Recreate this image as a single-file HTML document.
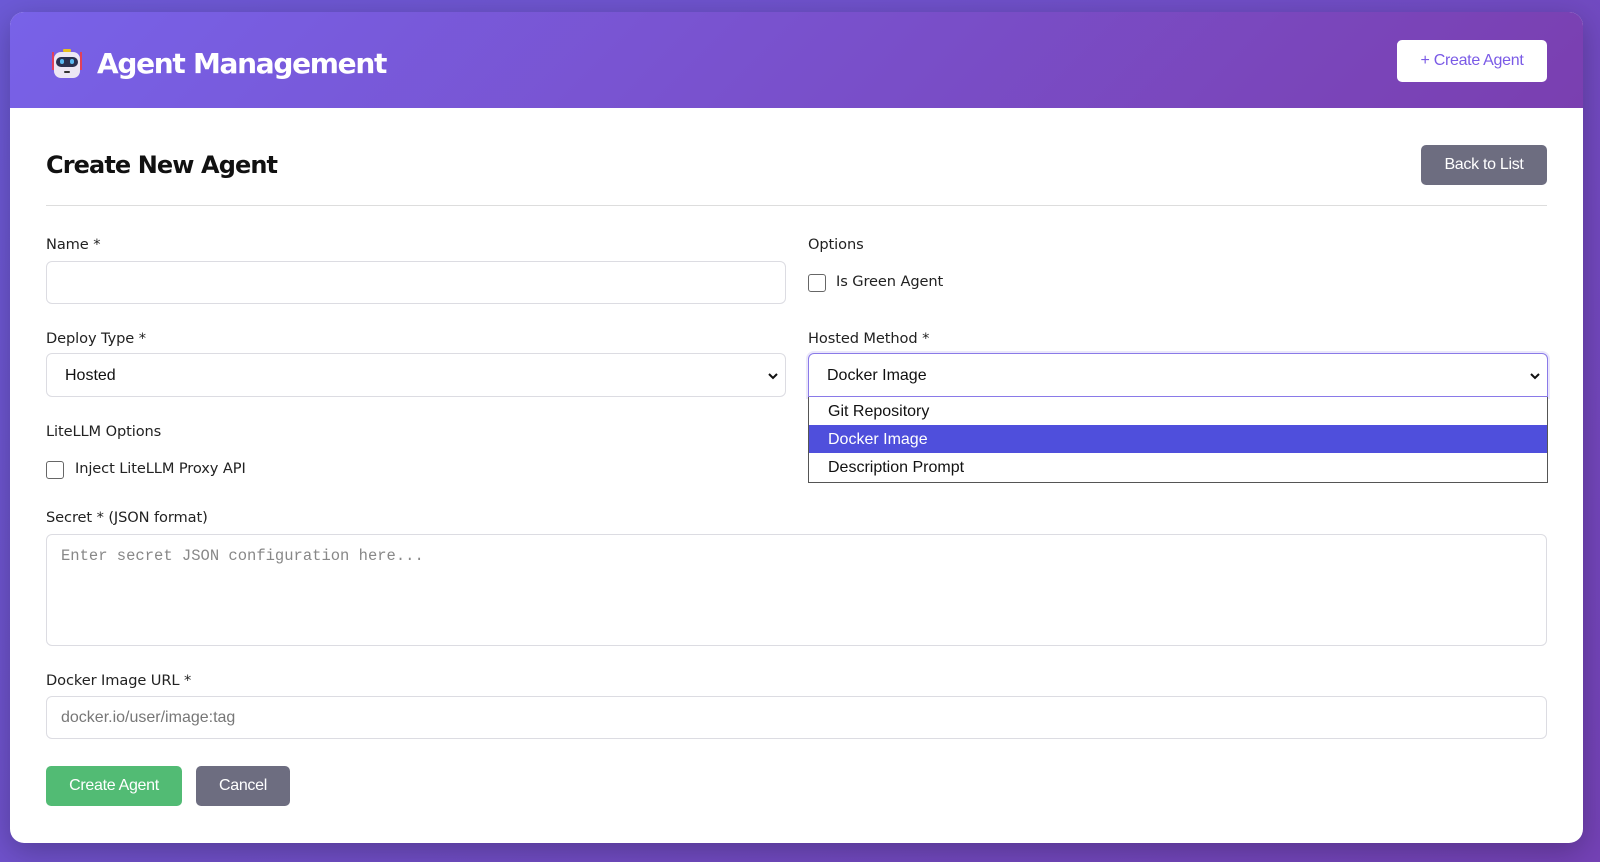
<!DOCTYPE html>
<html><head><meta charset="utf-8"><style>
*{box-sizing:border-box;margin:0;padding:0}
body{width:1600px;height:862px;overflow:hidden;background:linear-gradient(135deg,#6c5ad6,#7442b6);font-family:"Liberation Sans",sans-serif;position:relative}
.card{position:absolute;left:10px;top:12px;width:1573px;height:831px;background:#fff;border-radius:14px;overflow:hidden;box-shadow:0 8px 30px rgba(0,0,0,.25)}
.hdr{position:absolute;left:0;top:0;width:100%;height:96px;background:linear-gradient(135deg,#7862e8,#7a3fb0)}
.a{position:absolute}
.lbl{position:absolute;font-family:"DejaVu Sans","Liberation Sans",sans-serif;font-size:14.6px;color:#222;letter-spacing:-.1px}
.inp{position:absolute;border:1px solid #dcdce2;border-radius:6px;background:#fff;font-size:16px;color:#111}
.cb{position:absolute;width:18px;height:18px;border:1.5px solid #666;border-radius:3px;background:#fff}
.btn{position:absolute;border-radius:5px;color:#fff;font-size:16px;display:flex;align-items:center;justify-content:center;letter-spacing:-.3px}
.chev{position:absolute;right:6px;top:16px}
</style></head><body>
<div class="card">
 <div class="hdr"></div>
 <svg class="a" style="left:40px;top:34px" width="34" height="34" viewBox="0 0 34 34">
  <rect x="13" y="3" width="8" height="3" rx="1" fill="#e8c020"/>
  <line x1="3" y1="6" x2="3" y2="24" stroke="#e0405a" stroke-width="2"/><line x1="31" y1="6" x2="31" y2="24" stroke="#e0405a" stroke-width="2"/>
  <rect x="4" y="6" width="26" height="26" rx="7" fill="#ece6f4"/>
  <rect x="6" y="11" width="22" height="10" rx="5" fill="#2a3050"/>
  <rect x="10" y="13" width="4" height="5" rx="2" fill="#5ab8f0"/><rect x="20" y="13" width="4" height="5" rx="2" fill="#5ab8f0"/>
  <rect x="14" y="25" width="6" height="2" rx="1" fill="#333"/>
 </svg>
 <div class="a" style="left:87px;top:35px;font-family:'DejaVu Sans',sans-serif;font-size:28px;color:#fff;font-weight:bold;letter-spacing:-1.3px">Agent Management</div>
 <div class="btn" style="left:1387px;top:28px;width:150px;height:42px;background:#fff;color:#7a5ae6;border-radius:5px">+ Create Agent</div>
 <div class="a" style="left:36px;top:139px;font-family:'DejaVu Sans',sans-serif;font-size:24px;font-weight:bold;color:#111;letter-spacing:-.9px">Create New Agent</div>
 <div class="btn" style="left:1411px;top:133px;width:126px;height:40px;background:#6d6d80">Back to List</div>
 <div class="a" style="left:36px;top:193px;width:1501px;height:1px;background:#ddd"></div>

 <div class="lbl" style="left:36px;top:224px">Name *</div>
 <div class="inp" style="left:36px;top:249px;width:740px;height:43px"></div>
 <div class="lbl" style="left:798px;top:224px">Options</div>
 <div class="cb" style="left:798px;top:262px"></div>
 <div class="lbl" style="left:826px;top:261px">Is Green Agent</div>

 <div class="lbl" style="left:36px;top:318px">Deploy Type *</div>
 <div class="inp" style="left:36px;top:341px;width:740px;height:44px;padding:13px 18px">Hosted<svg class="chev" width="12" height="12" viewBox="0 0 12 12"><path d="M2 4l4 4 4-4" fill="none" stroke="#111" stroke-width="2"/></svg></div>
 <div class="lbl" style="left:798px;top:318px">Hosted Method *</div>
 <div class="inp" style="left:798px;top:341px;width:740px;height:44px;padding:13px 18px;border-color:#8a7ae8;box-shadow:0 0 0 2px rgba(120,100,230,.15);border-bottom-left-radius:0;border-bottom-right-radius:0">Docker Image<svg class="chev" width="12" height="12" viewBox="0 0 12 12"><path d="M2 4l4 4 4-4" fill="none" stroke="#111" stroke-width="2"/></svg></div>
 <div class="a" style="left:798px;top:385px;width:740px;height:86px;border:1px solid #555;border-top:none;background:#fff;font-size:16px;color:#111">
  <div style="height:28px;padding:6px 19px">Git Repository</div>
  <div style="height:28px;padding:6px 19px;background:#4f4fdc;color:#fff">Docker Image</div>
  <div style="height:28px;padding:6px 19px">Description Prompt</div>
 </div>

 <div class="lbl" style="left:36px;top:411px">LiteLLM Options</div>
 <div class="cb" style="left:36px;top:449px"></div>
 <div class="lbl" style="left:65px;top:448px">Inject LiteLLM Proxy API</div>

 <div class="lbl" style="left:36px;top:497px">Secret * (JSON format)</div>
 <div class="inp" style="left:36px;top:522px;width:1501px;height:112px;padding:12px 14px;font-family:'Liberation Mono',monospace;font-size:15.5px;color:#888">Enter secret JSON configuration here...</div>

 <div class="lbl" style="left:36px;top:660px">Docker Image URL *</div>
 <div class="inp" style="left:36px;top:684px;width:1501px;height:43px;padding:12px 14px;color:#777">docker.io/user/image:tag</div>

 <div class="btn" style="left:36px;top:754px;width:136px;height:40px;background:#52bb74">Create Agent</div>
 <div class="btn" style="left:186px;top:754px;width:94px;height:40px;background:#6d6d80">Cancel</div>
</div>
</body></html>
